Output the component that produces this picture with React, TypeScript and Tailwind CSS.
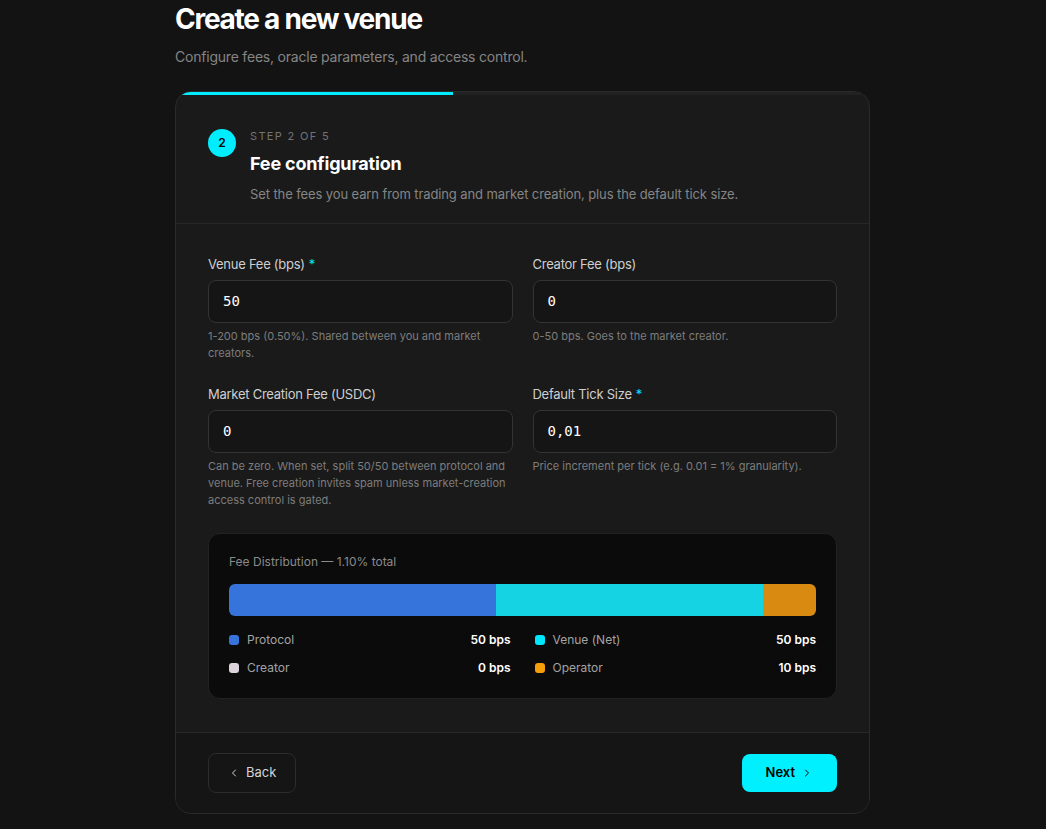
import React from 'react'
import { ChevronLeft, ChevronRight } from 'lucide-react'

const sans = { fontFamily: 'Inter, "Noto Sans", sans-serif' }

function Field({
  label,
  required,
  value,
  help,
}: {
  label: string
  required?: boolean
  value: string
  help: string
}) {
  return (
    <div>
      <label className="block text-[13px] leading-4 tracking-[-0.02em] text-[#cfcfcf] mb-2">
        {label}
        {required && <span className="ml-1 text-[#00e5ff]">*</span>}
      </label>
      <div className="h-[43px] rounded-lg border border-[#333333] bg-[#151515] flex items-center px-[14px]">
        <span className="text-[14px] text-white font-['DejaVu_Sans_Mono',monospace]">{value}</span>
      </div>
      <p className="mt-[5px] text-[11px] leading-[17px] text-[#7d7d7d]">{help}</p>
    </div>
  )
}

const legend = [
  { name: 'Protocol', value: '50 bps', dot: 'bg-[#3674dc]' },
  { name: 'Venue (Net)', value: '50 bps', dot: 'bg-[#00e8ff]' },
  { name: 'Creator', value: '0 bps', dot: 'bg-[#dcd3dc]' },
  { name: 'Operator', value: '10 bps', dot: 'bg-[#f59e0b]' },
]

export default function App() {
  return (
    <div className="min-h-screen bg-[#131313] text-white" style={sans}>
      <div className="w-[695px] ml-[175px] pt-[1px]">
        <h1 className="text-[28px] leading-9 font-bold tracking-[-0.045em] text-white">Create a new venue</h1>
        <p className="mt-2.5 text-[14px] leading-5 tracking-[-0.015em] text-[#858585]">
          Configure fees, oracle parameters, and access control.
        </p>

        <div className="mt-6 rounded-2xl border border-[#2a2a2a] bg-[#1a1a1a] overflow-hidden">
          <div className="h-[3px] bg-[#222222]">
            <div className="h-full w-2/5 bg-[#00ecff]" />
          </div>

          {/* step header */}
          <div className="px-8 pt-[33px] pb-[19px] flex gap-3.5 border-b border-[#272727]">
            <div className="mt-[1px] w-7 h-7 rounded-full bg-[#00ecff] flex items-center justify-center text-[12px] font-semibold text-black shrink-0">
              2
            </div>
            <div>
              <div className="text-[11px] leading-4 tracking-[0.12em] text-[#737373]">STEP 2 OF 5</div>
              <h2 className="mt-1.5 text-[18px] leading-7 font-bold tracking-[-0.01em] text-white">Fee configuration</h2>
              <p className="mt-1.5 text-[13px] leading-5 tracking-[-0.008em] text-[#858585]">
                Set the fees you earn from trading and market creation, plus the default tick size.
              </p>
            </div>
          </div>

          {/* fields */}
          <div className="px-8 pt-8 pb-[33px] border-b border-[#272727]">
            <div className="grid grid-cols-2 gap-x-5 gap-y-6">
              <Field
                label="Venue Fee (bps)"
                required
                value="50"
                help="1-200 bps (0.50%). Shared between you and market creators."
              />
              <Field label="Creator Fee (bps)" value="0" help="0-50 bps. Goes to the market creator." />
              <Field
                label="Market Creation Fee (USDC)"
                value="0"
                help="Can be zero. When set, split 50/50 between protocol and venue. Free creation invites spam unless market-creation access control is gated."
              />
              <Field
                label="Default Tick Size"
                required
                value="0,01"
                help="Price increment per tick (e.g. 0.01 = 1% granularity)."
              />
            </div>

            <div className="mt-6 rounded-xl border border-[#222222] bg-[#0b0b0b] p-5">
              <div className="text-[12px] leading-4 text-[#8a8a8a]">Fee Distribution — 1.10% total</div>
              <div className="mt-3.5 h-8 rounded-md overflow-hidden flex">
                <div className="bg-[#3674dc]" style={{ width: `${(50 / 110) * 100}%` }} />
                <div className="bg-[#16d3e3]" style={{ width: `${(50 / 110) * 100}%` }} />
                <div className="bg-[#d98a10]" style={{ width: `${(10 / 110) * 100}%` }} />
              </div>
              <div className="mt-3.5 grid grid-cols-2 gap-x-6 gap-y-2">
                {legend.map((l) => (
                  <div key={l.name} className="flex items-center h-5 text-[12px]">
                    <span className={`w-[10px] h-[10px] rounded-[3px] ${l.dot}`} />
                    <span className="ml-2 text-[#a3a3a3]">{l.name}</span>
                    <span className="ml-auto font-semibold text-white">{l.value}</span>
                  </div>
                ))}
              </div>
            </div>
          </div>

          {/* footer */}
          <div className="bg-[#151515] px-8 py-5 flex items-center justify-between">
            <button className="h-10 px-[19px] rounded-lg border border-[#2c2c2c] flex items-center gap-1.5 text-[13px] text-[#d4d4d4]">
              <ChevronLeft size={12} strokeWidth={2} />
              Back
            </button>
            <button className="h-[38px] px-6 rounded-lg bg-[#00f0ff] flex items-center gap-1.5 text-[13px] font-semibold text-black">
              Next
              <ChevronRight size={12} strokeWidth={2} />
            </button>
          </div>
        </div>
      </div>
    </div>
  )
}
